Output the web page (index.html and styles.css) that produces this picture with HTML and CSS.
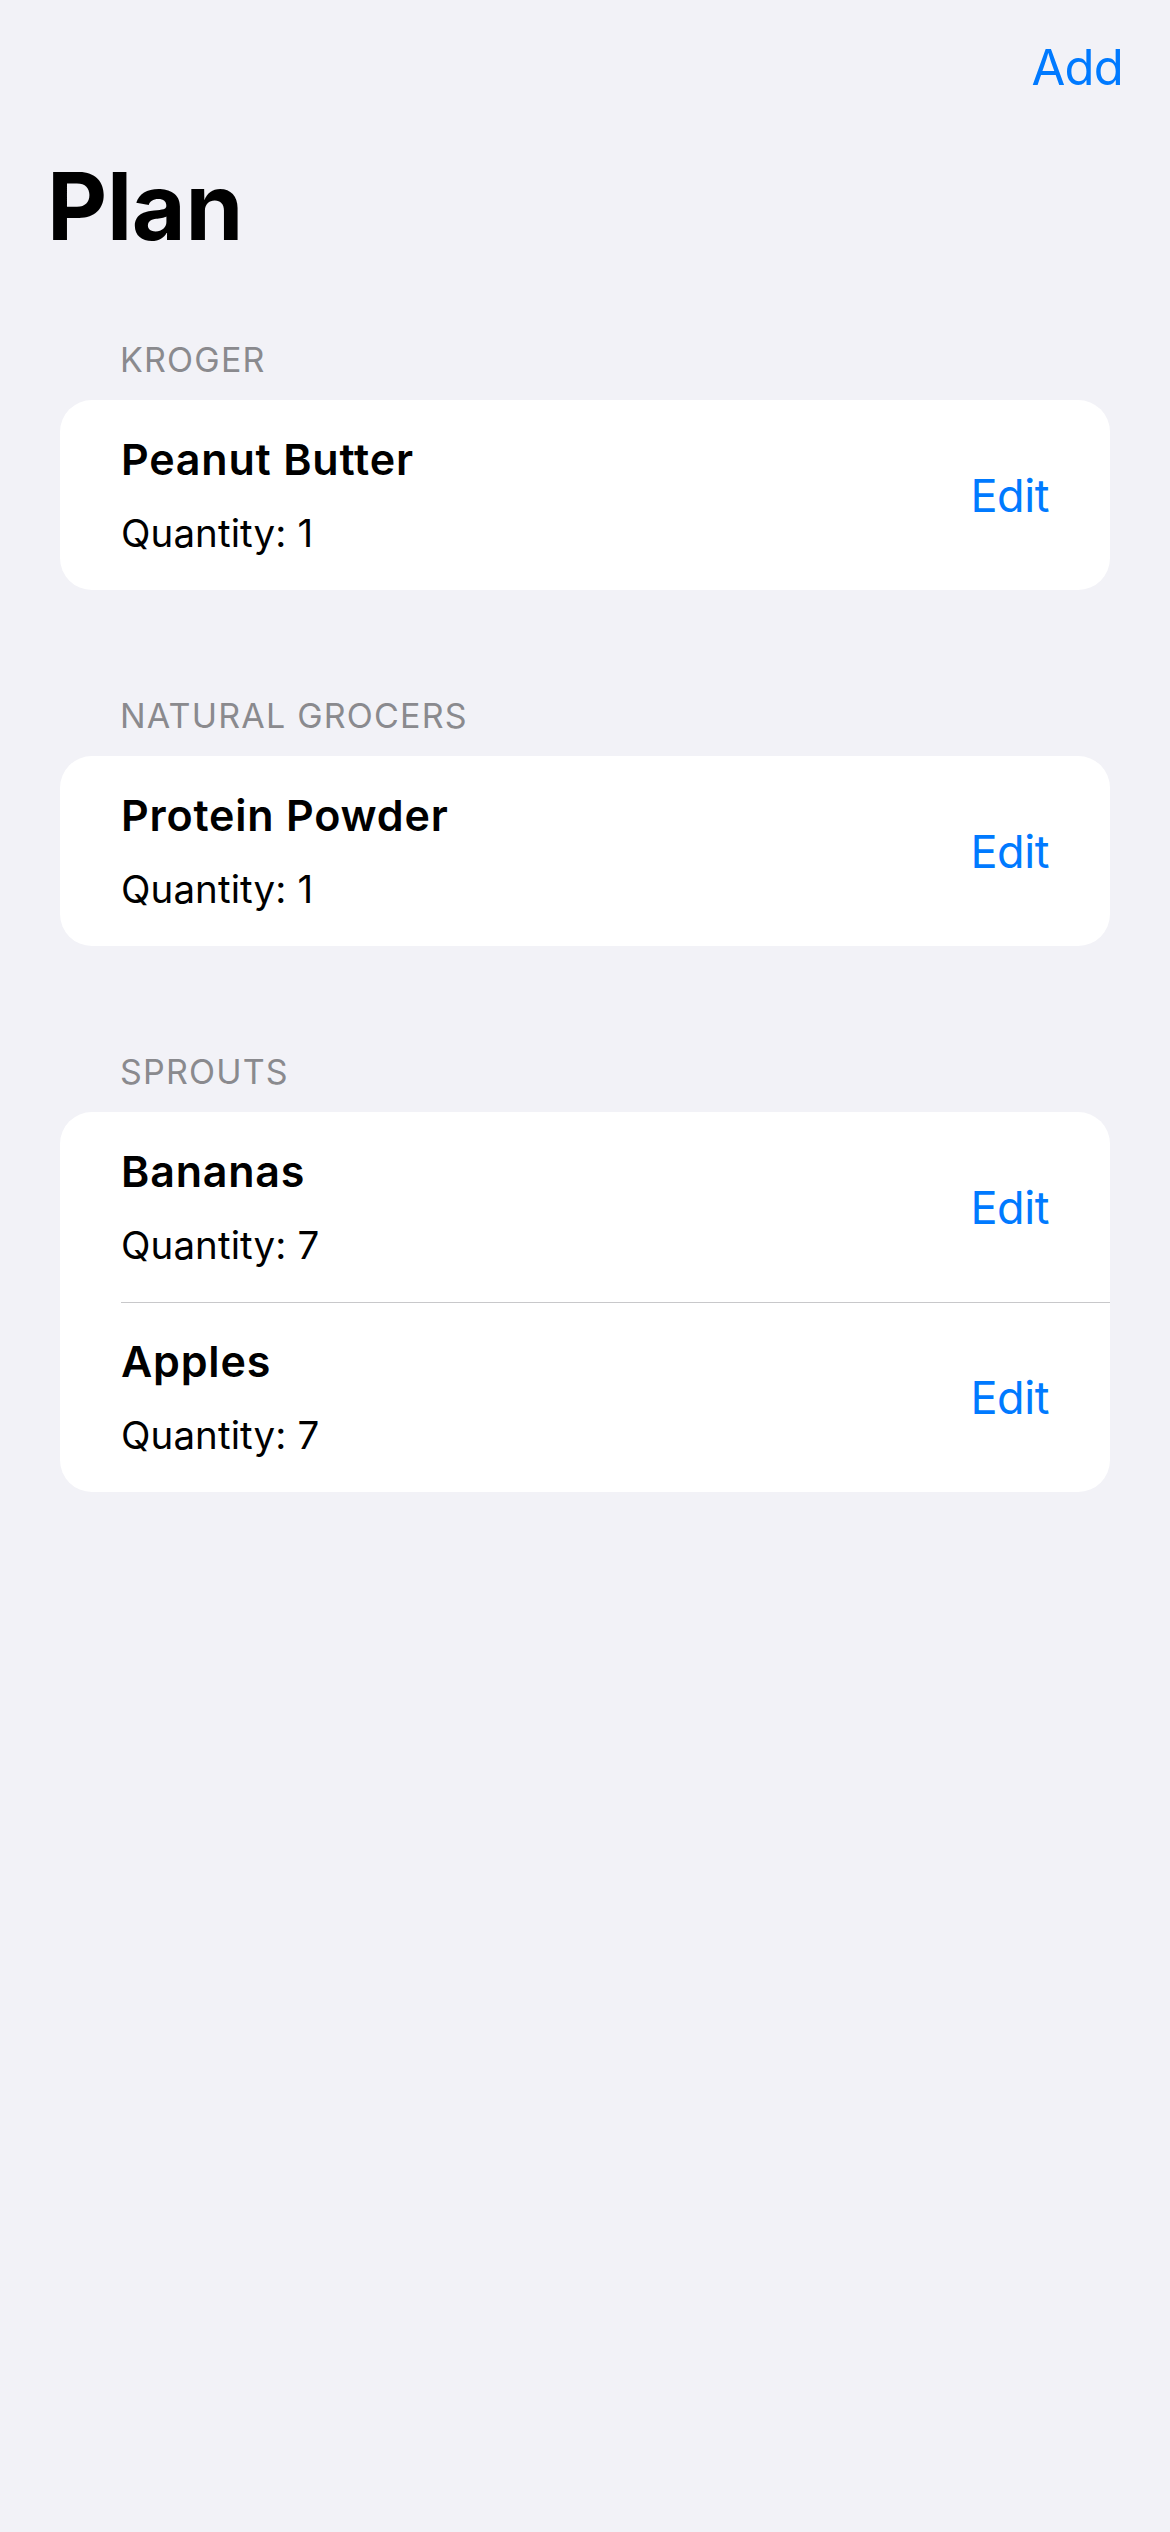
FILE: index.html
```html
<!DOCTYPE html>
<html lang="en">
<head>
<meta charset="utf-8">
<title>Plan</title>
<link rel="stylesheet" href="styles.css">
</head>
<body>
<div class="screen">
  <header class="navbar">
    <span class="nav-button">Add</span>
  </header>
  <h1 class="large-title">Plan</h1>

  <section class="section first">
    <h2 class="section-header">KROGER</h2>
    <div class="card">
      <div class="row">
        <div class="row-text">
          <div class="item-name">Peanut Butter</div>
          <div class="item-qty">Quantity: 1</div>
        </div>
        <span class="edit">Edit</span>
      </div>
    </div>
  </section>

  <section class="section">
    <h2 class="section-header">NATURAL GROCERS</h2>
    <div class="card">
      <div class="row">
        <div class="row-text">
          <div class="item-name">Protein Powder</div>
          <div class="item-qty">Quantity: 1</div>
        </div>
        <span class="edit">Edit</span>
      </div>
    </div>
  </section>

  <section class="section">
    <h2 class="section-header">SPROUTS</h2>
    <div class="card">
      <div class="row">
        <div class="row-text">
          <div class="item-name">Bananas</div>
          <div class="item-qty">Quantity: 7</div>
        </div>
        <span class="edit">Edit</span>
      </div>
      <div class="row">
        <div class="row-text">
          <div class="item-name">Apples</div>
          <div class="item-qty">Quantity: 7</div>
        </div>
        <span class="edit">Edit</span>
      </div>
    </div>
  </section>
</div>
</body>
</html>
```

FILE: styles.css
```css
html, body {
  margin: 0;
  padding: 0;
  background: #F2F2F7;
}

body {
  font-family: "Inter", "Roboto", "Liberation Sans", sans-serif;
  color: #000;
  min-height: 2532px;
}

.screen {
  display: flex;
  flex-direction: column;
}

.navbar {
  display: flex;
  justify-content: flex-end;
  padding: 43px 47px 0 0;
}

.nav-button {
  font-size: 49px;
  line-height: 49px;
  letter-spacing: -0.8px;
  color: #007AFF;
}

.large-title {
  margin: 68px 0 0 0;
  padding-left: 47px;
  font-size: 93px;
  line-height: 93px;
  font-weight: 700;
  letter-spacing: -0.3px;
}

.section {
  display: flex;
  flex-direction: column;
  padding: 0 60px;
  margin-top: 109px;
}

.section.first {
  margin-top: 90px;
}

.section-header {
  margin: 0 0 23px 0;
  padding-left: 60px;
  font-size: 34px;
  line-height: 34px;
  font-weight: 400;
  letter-spacing: 1.2px;
  color: #8A8A8E;
}

.card {
  background: #FFFFFF;
  border-radius: 32px;
  display: flex;
  flex-direction: column;
}

.row {
  height: 190px;
  box-sizing: border-box;
  margin-left: 61px;
  padding-right: 61px;
  display: flex;
  align-items: center;
  justify-content: space-between;
}

.row + .row {
  border-top: 1px solid #C8C8CA;
}

.row-text {
  display: flex;
  flex-direction: column;
  gap: 33px;
}

.item-name {
  font-size: 43px;
  line-height: 43px;
  font-weight: 600;
  letter-spacing: 0.8px;
}

.item-qty {
  font-size: 38.5px;
  line-height: 38.5px;
  font-weight: 400;
  letter-spacing: 0.1px;
}

.edit {
  font-size: 45px;
  line-height: 45px;
  letter-spacing: -0.4px;
  color: #007AFF;
}
```
